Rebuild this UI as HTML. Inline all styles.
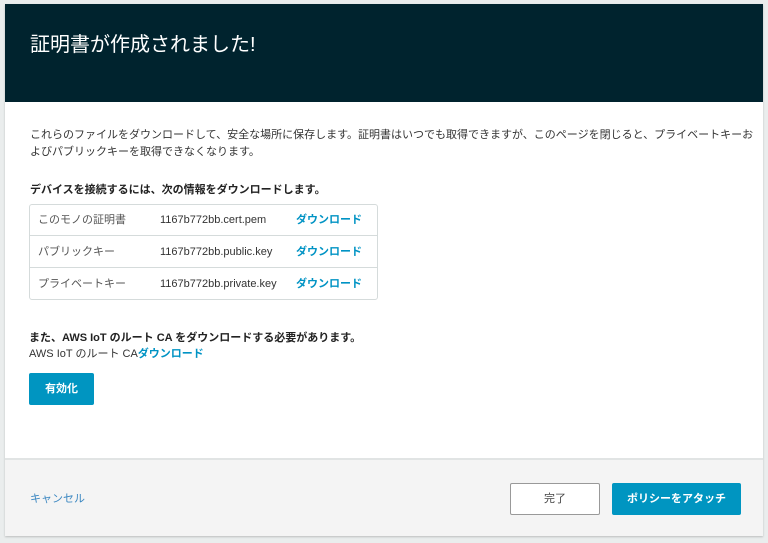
<!DOCTYPE html>
<html><head><meta charset="utf-8"><style>
*{margin:0;padding:0;box-sizing:border-box}
body{width:768px;height:543px;background:#eaeded;font-family:"Liberation Sans","Noto Sans CJK JP",sans-serif;position:relative;overflow:hidden;color:#333}
.card{position:absolute;left:5px;top:4px;width:758px;height:532px;background:#fff;box-shadow:0 1px 2px rgba(0,0,0,.2)}
.hd{position:absolute;left:0;top:0;width:758px;height:98px;background:#00232e}
.hd h1{position:absolute;left:25px;top:24px;font-size:20px;font-weight:normal;color:#fff}
.t{position:absolute;font-size:11px;line-height:17px;color:#333}
.b{font-weight:bold;color:#222}
.tbl{position:absolute;left:24px;top:200px;width:349px;height:96px;border:1px solid #d5dbdb;border-radius:3px}
.row{position:absolute;left:0;width:347px;height:31px;font-size:11px;line-height:31px}
.row span{position:absolute}
.lnk{color:#0093c4;font-weight:bold}
.btn{position:absolute;font-size:11px;font-weight:bold;color:#fff;background:#0095c1;border-radius:2px;text-align:center}
.ft{position:absolute;left:0;top:454px;width:758px;height:78px;background:#f4f4f4;border-top:2px solid #e1e4e4}
</style></head><body>
<div class="card">
<div class="hd"><h1>証明書が作成されました!</h1></div>
<div class="t" style="left:25px;top:123px;white-space:nowrap">これらのファイルをダウンロードして、安全な場所に保存します。証明書はいつでも取得できますが、このページを閉じると、プライベートキーお<br>よびパブリックキーを取得できなくなります。</div>
<div class="t b" style="left:25px;top:178px">デバイスを接続するには、次の情報をダウンロードします。</div>
<div class="tbl">
<div class="row" style="top:0;border-bottom:1px solid #d5dbdb"><span style="left:8px;color:#555">このモノの証明書</span><span style="left:130px">1167b772bb.cert.pem</span><span class="lnk" style="left:266px">ダウンロード</span></div>
<div class="row" style="top:32px;border-bottom:1px solid #d5dbdb"><span style="left:8px;color:#555">パブリックキー</span><span style="left:130px">1167b772bb.public.key</span><span class="lnk" style="left:266px">ダウンロード</span></div>
<div class="row" style="top:64px"><span style="left:8px;color:#555">プライベートキー</span><span style="left:130px">1167b772bb.private.key</span><span class="lnk" style="left:266px">ダウンロード</span></div>
</div>
<div class="t b" style="left:24px;top:326px">また、AWS IoT のルート CA をダウンロードする必要があります。</div>
<div class="t" style="left:24px;top:342px">AWS IoT のルート CA<span class="lnk">ダウンロード</span></div>
<div class="btn" style="left:24px;top:369px;width:65px;height:32px;line-height:32px">有効化</div>
<div class="ft">
<div class="t" style="left:25px;top:31px;color:#3b87c1">キャンセル</div>
<div style="position:absolute;left:505px;top:23px;width:90px;height:32px;line-height:30px;text-align:center;border:1px solid #999;background:#fff;border-radius:2px;font-size:11px;color:#444">完了</div>
<div class="btn" style="left:607px;top:23px;width:129px;height:32px;line-height:32px">ポリシーをアタッチ</div>
</div>
</div>
</body></html>
